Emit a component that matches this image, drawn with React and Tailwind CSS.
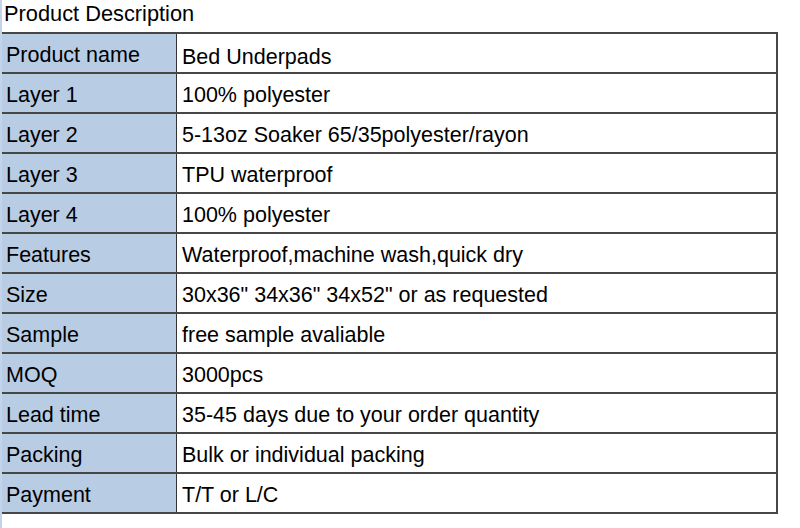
import React from "react";

const rows = [
  ["Product name", "Bed Underpads"],
  ["Layer 1", "100% polyester"],
  ["Layer 2", "5-13oz Soaker 65/35polyester/rayon"],
  ["Layer 3", "TPU waterproof"],
  ["Layer 4", "100% polyester"],
  ["Features", "Waterproof,machine wash,quick dry"],
  ["Size", '30x36" 34x36" 34x52" or as requested'],
  ["Sample", "free sample avaliable"],
  ["MOQ", "3000pcs"],
  ["Lead time", "35-45 days due to your order quantity"],
  ["Packing", "Bulk or individual packing"],
  ["Payment", "T/T or L/C"],
];

export default function App() {
  return (
    <div
      className="w-[800px] h-[528px] bg-white border-l-2 border-[#c3d4ea] text-black overflow-hidden"
      style={{ fontFamily: '"Liberation Sans", Arial, sans-serif' }}
    >
      <div className="h-[32px] pl-[2px] text-[21.8px] leading-[28px]">Product Description</div>

      <div className="w-[776px] border-r-2 border-b-2 border-[#474747]">
        {rows.map(([label, value], i) => (
          <div key={i} className="flex h-[40px] border-t-2 border-[#474747] text-[21.5px]">
            <div className="w-[175px] shrink-0 bg-[#b8cce4] border-r-[1.5px] border-[#333] pl-1 pt-1 flex items-center">
              {label}
            </div>
            <div className={"pl-[5px] flex items-center " + (i === 0 ? "pt-[9px]" : "pt-1")}>{value}</div>
          </div>
        ))}
      </div>
    </div>
  );
}
